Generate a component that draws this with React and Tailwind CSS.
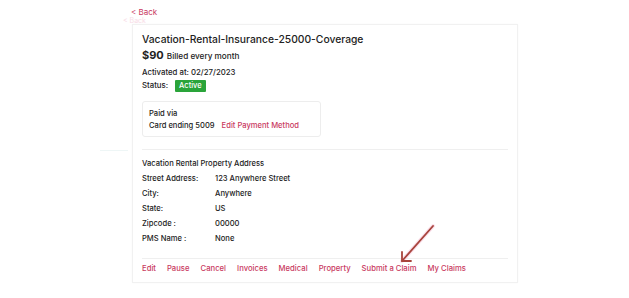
import React from "react";

const rows = [
  ["Street Address:", "123 Anywhere Street"],
  ["City:", "Anywhere"],
  ["State:", "US"],
  ["Zipcode :", "00000"],
  ["PMS Name :", "None"],
];

const links = ["Edit", "Pause", "Cancel", "Invoices", "Medical", "Property", "Submit a Claim", "My Claims"];

export default function App() {
  return (
    <div
      className="relative w-[629px] h-[298px] bg-white text-[#222] overflow-hidden"
      style={{ fontFamily: "Inter, 'Open Sans', sans-serif" }}
    >
      <div className="pl-[131px] pt-[7px] text-[8px] leading-[10px] text-[#c93a5f]">&lt; Back</div>
      <div className="pl-[123px] text-[7px] leading-[7px] text-[#f8dce6]">&lt; Back</div>

      <div className="ml-[132px] w-[386px] h-[259px] border border-[#f1f1f1] shadow-[0_0_2px_rgba(0,0,0,0.03)] px-[9px] pt-[7px]">
        <h1 className="text-[10.3px] leading-[14px] font-medium">Vacation-Rental-Insurance-25000-Coverage</h1>
        <div className="mt-[2px] leading-[14px] flex items-baseline gap-[3px]">
          <span className="text-[11px] font-bold">$90</span>
          <span className="text-[8.2px] font-medium">Billed every month</span>
        </div>
        <p className="mt-[3px] text-[7.8px] leading-[12px] font-medium">Activated at: 02/27/2023</p>
        <div className="mt-[2px] h-[12px] flex items-center gap-[7px] text-[7.8px] font-medium">
          <span>Status:</span>
          <span className="bg-[#2aa43a] text-white px-[4px] h-[12px] leading-[12px] rounded-[1px] text-[7.5px]">Active</span>
        </div>

        <div className="mt-[9px] w-[179px] h-[36px] border border-[#ededed] rounded-[3px] px-[6px] pt-[6px] text-[7.6px] leading-[12px] font-medium">
          <p>Paid via</p>
          <p className="flex gap-[7px]">
            <span>Card ending 5009</span>
            <span className="text-[#c93a5f]">Edit Payment Method</span>
          </p>
        </div>

        <div className="mt-[12px] h-px bg-[#efefef]" />

        <div className="mt-[6px] text-[7.6px] font-medium">
          <p className="leading-[15px]">Vacation Rental Property Address</p>
          {rows.map(([k, v]) => (
            <div key={k} className="flex leading-[15px]">
              <span className="w-[73px]">{k}</span>
              <span>{v}</span>
            </div>
          ))}
        </div>

        <div className="mt-[12px] h-px bg-[#efefef]" />

        <div className="mt-[4px] flex gap-[11px] text-[7.7px] leading-[12px] font-medium text-[#c93a5f]">
          {links.map((l) => (
            <span key={l}>{l}</span>
          ))}
        </div>
      </div>

      <div className="absolute left-[100px] top-[150px] w-[28px] h-px bg-[#eef6f6]" />

      <svg className="absolute left-[396px] top-[222px]" width="42" height="44" viewBox="0 0 42 44">
        <g stroke="#f7c9dc" strokeWidth="4" fill="none" strokeLinecap="round" opacity="0.6">
          <path d="M37 4 L6 39" />
        </g>
        <g stroke="#a8443c" strokeWidth="1.8" fill="none" strokeLinecap="round" strokeLinejoin="round">
          <path d="M37 4 L6 39" />
          <path d="M6 30 L6 39 L15 39" />
        </g>
      </svg>
    </div>
  );
}
